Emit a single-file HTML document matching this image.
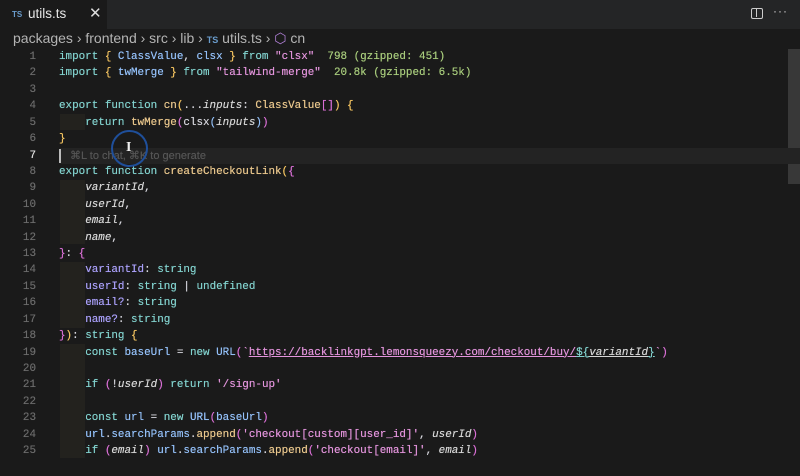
<!DOCTYPE html>
<html><head><meta charset="utf-8"><style>
*{margin:0;padding:0;box-sizing:border-box}
body{width:800px;height:458px;overflow:hidden;background:#1a1a1a;font-family:"Liberation Sans",sans-serif;position:relative}
.tabbar{position:absolute;left:0;top:0;width:800px;height:29px;background:#242526}
.tab{position:absolute;left:0;top:0;width:107px;height:29px;background:#1a1a1a;color:#e6e6e6;font-size:13.5px}
.ts{color:#6a9ccc;font-size:8px;font-weight:bold;position:absolute;top:10px}
.crumb{position:absolute;top:30px;left:13px;color:#b4b4b4;font-size:14px;white-space:pre}
.code{position:absolute;left:0;top:49px;font-family:"Liberation Mono",monospace;font-size:10.92px;line-height:16.42px;white-space:pre;text-shadow:0 0 0.4px currentColor}
.ln{position:absolute;left:0;width:36px;text-align:right;color:#6b6b6b}
.l{position:absolute;left:59px;color:#d6d6dd}
.k{color:#82d2ce}.f{color:#ebc88d}.t{color:#94c1fa}.s{color:#e394dc}.b{color:#f8c762}.p{color:#da70d6}.g{color:#a8cc7c}.v{color:#d6d6d6;font-style:italic}.pr{color:#aaa0fa}
.u{text-decoration:underline}
.ig{position:absolute;left:60px;width:25px;background:#23221e}
</style></head><body>
<div class="tabbar"></div>
<div class="tab"><span class="ts" style="left:12px">TS</span><span style="position:absolute;left:28px;top:6px">utils.ts</span><span style="position:absolute;left:89px;top:4px;font-size:15px;color:#ddd">✕</span></div>
<div style="position:absolute;left:751px;top:8px;width:12px;height:11px;border:1.5px solid #ccc;border-radius:2px"><div style="position:absolute;left:3.5px;top:0;width:1.5px;height:8px;background:#ccc"></div></div>
<div style="position:absolute;left:773px;top:4px;color:#ccc;font-size:12px;letter-spacing:1px">···</div>
<div class="crumb">packages › frontend › src › lib › <span style="color:#6a9ccc;font-size:9px;font-weight:bold">TS</span> utils.ts › <span style="color:#b180d7">⬡</span> cn</div>
<div style="position:absolute;left:788px;top:49px;width:12px;height:135px;background:#383838"></div>
<div class="ig" style="top:114px;height:16px"></div>
<div class="ig" style="top:180px;height:64px"></div>
<div class="ig" style="top:262px;height:66px"></div>
<div class="ig" style="top:344px;height:114px"></div>
<div style="position:absolute;left:60px;top:148px;width:740px;height:16px;background:#232323"></div>
<div style="position:absolute;left:59px;top:149px;width:2px;height:14px;background:#bbb"></div>
<div class="code">
<div class="ln" style="top:0">1</div><div class="l" style="top:0"><span class="k">import</span> <span class="b">{</span> <span class="t">ClassValue</span>, <span class="t">clsx</span> <span class="b">}</span> <span class="k">from</span> <span class="s">"clsx"</span>  <span class="g">798 (gzipped: 451)</span></div>
<div class="ln" style="top:16.42px">2</div><div class="l" style="top:16.42px"><span class="k">import</span> <span class="b">{</span> <span class="t">twMerge</span> <span class="b">}</span> <span class="k">from</span> <span class="s">"tailwind-merge"</span>  <span class="g">20.8k (gzipped: 6.5k)</span></div>
<div class="ln" style="top:32.84px">3</div>
<div class="ln" style="top:49.26px">4</div><div class="l" style="top:49.26px"><span class="k">export function</span> <span class="f">cn</span><span class="b">(</span>...<span class="v">inputs</span>: <span class="f">ClassValue</span><span class="p">[]</span><span class="b">)</span> <span class="b">{</span></div>
<div class="ln" style="top:65.68px">5</div><div class="l" style="top:65.68px">    <span class="k">return</span> <span class="f">twMerge</span><span class="p">(</span>clsx<span class="t">(</span><span class="v">inputs</span><span class="t">)</span><span class="p">)</span></div>
<div class="ln" style="top:82.1px">6</div><div class="l" style="top:82.1px"><span class="b">}</span></div>
<div class="ln" style="top:98.52px;color:#e0e0e0">7</div><div class="l" style="top:98.52px;color:#555;font-family:'Liberation Sans',sans-serif;font-size:11px;left:70px">⌘L to chat, ⌘K to generate</div>
<div class="ln" style="top:114.94px">8</div><div class="l" style="top:114.94px"><span class="k">export function</span> <span class="f">createCheckoutLink</span><span class="b">(</span><span class="p">{</span></div>
<div class="ln" style="top:131.36px">9</div><div class="l" style="top:131.36px">    <span class="v">variantId</span>,</div>
<div class="ln" style="top:147.78px">10</div><div class="l" style="top:147.78px">    <span class="v">userId</span>,</div>
<div class="ln" style="top:164.2px">11</div><div class="l" style="top:164.2px">    <span class="v">email</span>,</div>
<div class="ln" style="top:180.62px">12</div><div class="l" style="top:180.62px">    <span class="v">name</span>,</div>
<div class="ln" style="top:197.04px">13</div><div class="l" style="top:197.04px"><span class="p">}</span>: <span class="p">{</span></div>
<div class="ln" style="top:213.46px">14</div><div class="l" style="top:213.46px">    <span class="pr">variantId</span>: <span class="k">string</span></div>
<div class="ln" style="top:229.88px">15</div><div class="l" style="top:229.88px">    <span class="pr">userId</span>: <span class="k">string</span> | <span class="k">undefined</span></div>
<div class="ln" style="top:246.3px">16</div><div class="l" style="top:246.3px">    <span class="pr">email?</span>: <span class="k">string</span></div>
<div class="ln" style="top:262.72px">17</div><div class="l" style="top:262.72px">    <span class="pr">name?</span>: <span class="k">string</span></div>
<div class="ln" style="top:279.14px">18</div><div class="l" style="top:279.14px"><span class="p">}</span><span class="b">)</span>: <span class="k">string</span> <span class="b">{</span></div>
<div class="ln" style="top:295.56px">19</div><div class="l" style="top:295.56px">    <span class="k">const</span> <span class="t">baseUrl</span> = <span class="k">new</span> <span class="t">URL</span><span class="p">(</span><span class="s">`<span class="u">https://backlinkgpt.lemonsqueezy.com/checkout/buy/</span></span><span class="k u">${</span><span class="v u">variantId</span><span class="k u">}</span><span class="s">`</span><span class="p">)</span></div>
<div class="ln" style="top:311.98px">20</div>
<div class="ln" style="top:328.4px">21</div><div class="l" style="top:328.4px">    <span class="k">if</span> <span class="p">(</span>!<span class="v">userId</span><span class="p">)</span> <span class="k">return</span> <span class="s">'/sign-up'</span></div>
<div class="ln" style="top:344.82px">22</div>
<div class="ln" style="top:361.24px">23</div><div class="l" style="top:361.24px">    <span class="k">const</span> <span class="t">url</span> = <span class="k">new</span> <span class="t">URL</span><span class="p">(</span><span class="t">baseUrl</span><span class="p">)</span></div>
<div class="ln" style="top:377.66px">24</div><div class="l" style="top:377.66px">    <span class="t">url</span>.<span class="t">searchParams</span>.<span class="f">append</span><span class="p">(</span><span class="s">'checkout[custom][user_id]'</span>, <span class="v">userId</span><span class="p">)</span></div>
<div class="ln" style="top:394.08px">25</div><div class="l" style="top:394.08px">    <span class="k">if</span> <span class="p">(</span><span class="v">email</span><span class="p">)</span> <span class="t">url</span>.<span class="t">searchParams</span>.<span class="f">append</span><span class="p">(</span><span class="s">'checkout[email]'</span>, <span class="v">email</span><span class="p">)</span></div>
</div>
<div style="position:absolute;left:111px;top:130px;width:37px;height:37px;border:2px solid #1f4f9a;border-radius:50%"></div>
<div style="position:absolute;left:126px;top:140px;color:#eee;font-size:14px;font-family:'Liberation Serif',serif;font-weight:bold">I</div>
</body></html>
